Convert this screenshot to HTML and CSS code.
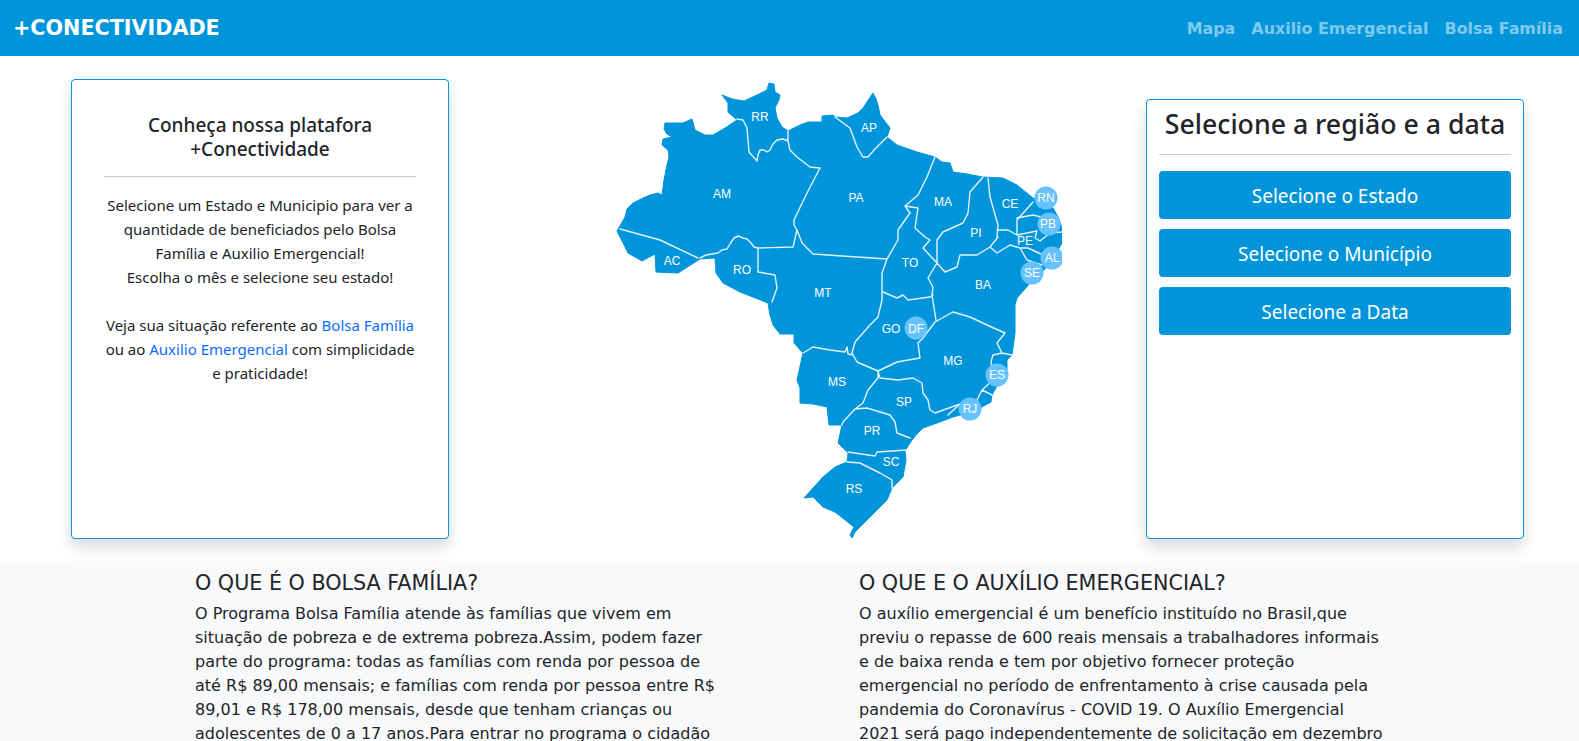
FILE: index.html
```html
<!DOCTYPE html>
<html lang="pt-BR">
<head>
<meta charset="utf-8">
<title>+Conectividade</title>
<link rel="stylesheet" href="styles.css">
</head>
<body>
<nav class="navbar">
  <a class="brand" href="#">+CONECTIVIDADE</a>
  <div class="nav-links">
    <a href="#">Mapa</a>
    <a href="#">Auxilio Emergencial</a>
    <a href="#">Bolsa Família</a>
  </div>
</nav>
<main class="hero">
  <section class="card card-left">
    <h2 class="card-title">Conheça nossa platafora<br>+Conectividade</h2>
    <hr class="rule">
    <p class="card-text">Selecione um Estado e Municipio para ver a quantidade de beneficiados pelo Bolsa Família e Auxilio Emergencial!<br>Escolha o mês e selecione seu estado!</p>
    <p class="card-text">Veja sua situação referente ao <a href="#">Bolsa Família</a> ou ao <a href="#">Auxilio Emergencial</a> com simplicidade e praticidade!</p>
  </section>
  <svg class="map" viewBox="610 78 452 462" role="img" aria-label="Mapa do Brasil">
    <path class="land" d="M722 95L732 99 744 101 757 95 767 90 769 83 774 84 775 92 780 95 779 100 775 108 777 118 782 127 788 131 800 125 808 122 822 122 822 116 833 115 835 117 847 118 858 113 863 108 873 93 876 99 878 105 880 115 890 128 887 137 897 145 917 152 935 157 942 162 950 163 953 172 967 174 983 177 1003 178 1017 185 1033 198 1047 203 1053 208 1058 217 1061 225 1062 232 1062 243 1058 250 1052 260 1047 267 1030 283 1024 290 1017 298 1015 305 1015 333 1012 355 1007 360 1007 375 997 386 992 395 991 402 980 408 967 413 953 417 937 423 923 428 917 434 912 440 905 451 906 460 903 477 892 488 887 500 870 517 855 532 852 538 850 535 854 527 835 512 823 507 813 497 804 498 823 477 835 467 847 462 848 453 838 443 842 425 829 425 827 407 813 404 800 403 800 388 797 380 803 353 794 343 794 334 780 334 773 325 770 315 768 303 740 292 723 283 716 273 715 258 700 259 678 273 656 272 655 254 642 261 628 253 617 231 621 224 625 217 627 209 633 203 643 198 650 195 658 193 662 195 664 180 667 165 669 157 668 150 662 145 663 139 672 137 667 134 664 129 665 123 683 123 692 119 695 130 705 135 713 135 725 128 737 120 728 112 728 103Z"/>
    <path class="borders" d="M737 119L743 120 747 128 749 152 757 161 758 155 760 150 764 150 767 152 770 150 773 144 777 140 783 139 788 141M788 131L788 141 790 150 797 157 810 167 820 168 807 193 794 220 794 225 797 230 793 247 758 248 754 247 751 243 747 239 743 238 738 236 734 238 730 244 727 249 722 250 718 253 712 254 706 255 700 258M620 229L660 240 698 258M835 117L850 128 857 147 863 157 868 157 875 149 887 137M758 248L758 272 775 275 777 288 772 302M797 230L802 243 813 254 887 259 882 273 882 292 882 300 878 317 870 325 855 342 852 353 857 362 878 371M803 353L813 347 830 350 845 352 847 347 848 354 853 355M883 292L897 298 903 295 908 300 930 297 933 295M887 259L898 240 898 230 910 213 905 206 918 195 927 177 935 157M905 206L918 208 915 228 925 237 930 240 923 248 937 263 928 278 933 287 932 295 936 320M983 177L970 192 968 213 963 223 943 232 937 240 937 263 945 272 957 267 960 255 977 255 990 247 998 237M988 178L990 197 998 225 997 237M990 247L997 253 1010 245 1020 248 1027 260 1042 265M997 230L1008 230 1017 235 1037 231 1035 238 1040 241 1050 233 1062 232M1017 235L1017 220 1033 202M1017 218L1033 215 1045 218M1020 248L1028 248 1043 255M935 322L953 312 970 317 987 325 1005 333 997 343 1002 353 1012 355M993 355L1002 353M993 355L991 362 993 380 982 390 977 400 960 404 935 413 930 410 928 400 923 393 922 383 913 378 898 380 880 378 878 371M982 390L992 395M935 322L923 338 918 343 920 358 897 362 878 371 878 378 868 390 863 403 855 409 843 422 842 425M855 409L867 408 890 415 895 422 897 433 910 438M960 404L948 415M848 452L875 456 877 452 906 450M847 462L860 463 880 473 892 480 892 488"/>
    <circle class="dot" cx="1046" cy="198" r="11.5"/>
    <circle class="dot" cx="1049" cy="224" r="11.5"/>
    <circle class="dot" cx="1052" cy="258" r="11.5"/>
    <circle class="dot" cx="1032" cy="273" r="11.5"/>
    <circle class="dot" cx="916" cy="328" r="11.5"/>
    <circle class="dot" cx="997" cy="375" r="11.5"/>
    <circle class="dot" cx="970" cy="409" r="11.5"/>
    <g class="labels">
      <text x="760" y="121">RR</text><text x="869" y="132">AP</text><text x="722" y="198">AM</text>
      <text x="856" y="202">PA</text><text x="672" y="265">AC</text><text x="742" y="274">RO</text>
      <text x="823" y="297">MT</text><text x="943" y="206">MA</text><text x="976" y="237">PI</text>
      <text x="1010" y="208">CE</text><text x="1046" y="202">RN</text><text x="1048" y="228">PB</text>
      <text x="1025" y="245">PE</text><text x="1052" y="262">AL</text><text x="1032" y="277">SE</text>
      <text x="910" y="267">TO</text><text x="983" y="289">BA</text><text x="891" y="333">GO</text>
      <text x="916" y="333">DF</text><text x="953" y="365">MG</text><text x="997" y="379">ES</text>
      <text x="837" y="386">MS</text><text x="904" y="406">SP</text><text x="970" y="413">RJ</text>
      <text x="872" y="435">PR</text><text x="891" y="466">SC</text><text x="854" y="493">RS</text>
    </g>
  </svg>
  <section class="card card-right">
    <h2 class="select-title">Selecione a região e a data</h2>
    <hr class="rule rule-tight">
    <div class="button-stack">
      <button class="select-btn" type="button">Selecione o Estado</button>
      <button class="select-btn" type="button">Selecione o Município</button>
      <button class="select-btn" type="button">Selecione a Data</button>
    </div>
  </section>
</main>
<section class="info">
  <article class="info-col">
    <h3>O QUE É O BOLSA FAMÍLIA?</h3>
    <p>O Programa Bolsa Família atende às famílias que vivem em<br>situação de pobreza e de extrema pobreza.Assim, podem fazer<br>parte do programa: todas as famílias com renda por pessoa de<br>até R$ 89,00 mensais; e famílias com renda por pessoa entre R$<br>89,01 e R$ 178,00 mensais, desde que tenham crianças ou<br>adolescentes de 0 a 17 anos.Para entrar no programa o cidadão</p>
  </article>
  <article class="info-col">
    <h3>O QUE E O AUXÍLIO EMERGENCIAL?</h3>
    <p>O auxílio emergencial é um benefício instituído no Brasil,que<br>previu o repasse de 600 reais mensais a trabalhadores informais<br>e de baixa renda e tem por objetivo fornecer proteção<br>emergencial no período de enfrentamento à crise causada pela<br>pandemia do Coronavírus - COVID 19. O Auxílio Emergencial<br>2021 será pago independentemente de solicitação em dezembro</p>
  </article>
</section>
</body>
</html>
```
FILE: styles.css
```css
* { box-sizing: border-box; }
html, body { height: 100%; }
body {
  margin: 0;
  overflow: hidden;
  background: #fff;
  color: #212529;
  font-family: "Noto Sans", "Open Sans", sans-serif;
}
.navbar {
  height: 56px;
  background: #0095da;
  display: flex;
  align-items: center;
  justify-content: space-between;
  padding: 0 8px 0 13px;
  font-family: "DejaVu Sans", Verdana, sans-serif;
  font-weight: 700;
}
.navbar a { text-decoration: none; }
.brand { color: #fff; font-size: 20.7px; }
.nav-links { display: flex; }
.nav-links a { color: rgba(255,255,255,.5); font-size: 15.9px; padding: 0 8px; }
.hero {
  height: 505px;
  display: flex;
  align-items: flex-end;
  padding: 0 55px 22px 71px;
}
.card {
  width: 378px;
  background: #fff;
  border: 1px solid #0095da;
  border-radius: 4px;
  box-shadow: 0 8px 16px rgba(0,0,0,.15);
  flex: none;
}
.card-left { height: 460px; padding: 33px 32px; text-align: center; }
.card-right { height: 440px; padding: 0 12px; }
.card-title { margin: 0; font-size: 19px; line-height: 24px; font-weight: 500; }
.rule { border: 0; border-top: 1px solid #ccc; margin: 15px 0 16px; }
.rule-tight { margin: 7px 0 16px; }
.card-text { margin: 0 0 24px; font-size: 15px; line-height: 24px; }
.card-text a { color: #0d6efd; text-decoration: none; }
.select-title { margin: 0; text-align: center; font-size: 26.7px; line-height: 47px; font-weight: 500; }
.map { flex: none; width: 452px; height: 462px; margin: 22px 84px 0 161px; align-self: flex-start; }
.land { fill: #0095da; stroke: #0095da; stroke-width: 1; stroke-linejoin: round; }
.borders { fill: none; stroke: #e3f3fc; stroke-width: 1.4; stroke-linejoin: round; stroke-linecap: round; }
.dot { fill: #66c2ff; }
.labels text { fill: #fff; font-family: "Liberation Sans", Arial, sans-serif; font-size: 12px; text-anchor: middle; }
.button-stack { display: flex; flex-direction: column; gap: 10px; }
.select-btn {
  height: 48px;
  padding: 2px 0 0;
  border: 0;
  border-radius: 4px;
  background: #0095da;
  color: #fff;
  font-family: inherit;
  font-size: 19px;
}
.info {
  height: 180px;
  overflow: hidden;
  background: #f8f9fa;
  display: flex;
  padding-left: 195px;
  font-family: "DejaVu Sans", Verdana, sans-serif;
}
.info-col { width: 522px; margin-right: 142px; flex: none; }
.info-col h3 { margin: 10px 0 7px; font-size: 20.7px; line-height: 24px; font-weight: 400; }
.info-col p { margin: 0; font-size: 16px; line-height: 24px; white-space: nowrap; }
```
